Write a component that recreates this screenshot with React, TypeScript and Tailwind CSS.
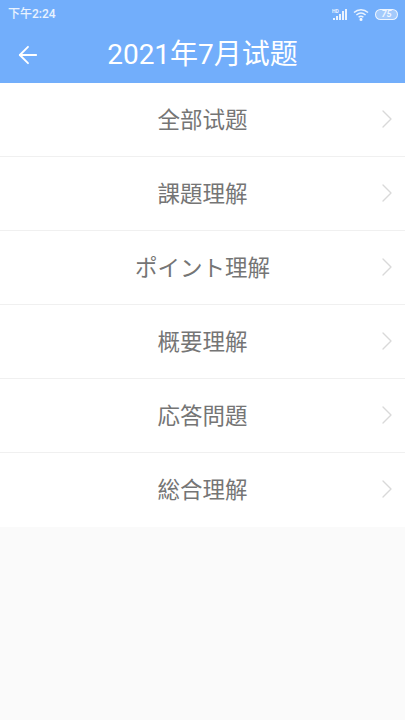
import { ArrowLeft, ChevronRight } from 'lucide-react';

const ITEMS = ['全部试题', '課題理解', 'ポイント理解', '概要理解', '応答問題', '総合理解'];

const FONT = "font-['Roboto','Noto_Sans_CJK_SC',sans-serif]";

function StatusBar() {
  return (
    <div className="h-[27px] flex items-center justify-between pl-2 pr-[7px] pt-px">
      <span className="text-[12px] font-medium text-white/85">下午2:24</span>
      <div className="flex items-center gap-[5px] text-white/85">
        {/* signal */}
        <svg width="16" height="13" viewBox="0 0 16 13" fill="currentColor">
          <text x="0" y="5" fontSize="5" fontWeight="700">HD</text>
          <rect x="1" y="10" width="2" height="2" />
          <rect x="4" y="8" width="2" height="4" />
          <rect x="7" y="6" width="2" height="6" />
          <rect x="10" y="3" width="2" height="9" />
          <rect x="13" y="1" width="2" height="11" />
        </svg>
        {/* wifi */}
        <svg width="16" height="13" viewBox="0 0 16 13" fill="none" stroke="currentColor" strokeWidth="1.5">
          <path d="M1 4.5C5 .9 11 .9 15 4.5" />
          <path d="M3.4 7C6.2 4.6 9.8 4.6 12.6 7" />
          <path d="M5.6 9.3C7 8.1 9 8.1 10.4 9.3" />
          <circle cx="8" cy="11.4" r="0.8" fill="currentColor" />
        </svg>
        {/* battery */}
        <div className="ml-[1px] w-[23px] h-[11px] rounded-full border border-white/80 bg-white/35 flex items-center justify-center text-[9px] leading-none font-semibold italic">
          75
        </div>
      </div>
    </div>
  );
}

export default function App() {
  return (
    <div className={`${FONT} min-h-[720px] bg-[#fafafa]`}>
      <header className="h-[83px] bg-[#72aefb] text-white">
        <StatusBar />
        <div className="relative h-[56px] flex items-center justify-center">
          <ArrowLeft className="absolute left-[14px] top-[14px] w-[28px] h-[28px]" strokeWidth={1.6} />
          <h1 className="text-[28px] leading-none font-normal">2021年7月试题</h1>
        </div>
      </header>

      <ul className="bg-white">
        {ITEMS.map((item, i) => (
          <li
            key={item}
            className={`relative h-[74px] flex items-center justify-center pt-[2px] text-[22.5px] text-[#757575] ${i < ITEMS.length - 1 ? 'border-b border-[#f0f0f0]' : ''}`}
          >
            {item}
            <ChevronRight className="absolute right-[2px] top-[20px] w-[32px] h-[32px] text-[#d9d9d9]" strokeWidth={1} />
          </li>
        ))}
      </ul>
    </div>
  );
}
